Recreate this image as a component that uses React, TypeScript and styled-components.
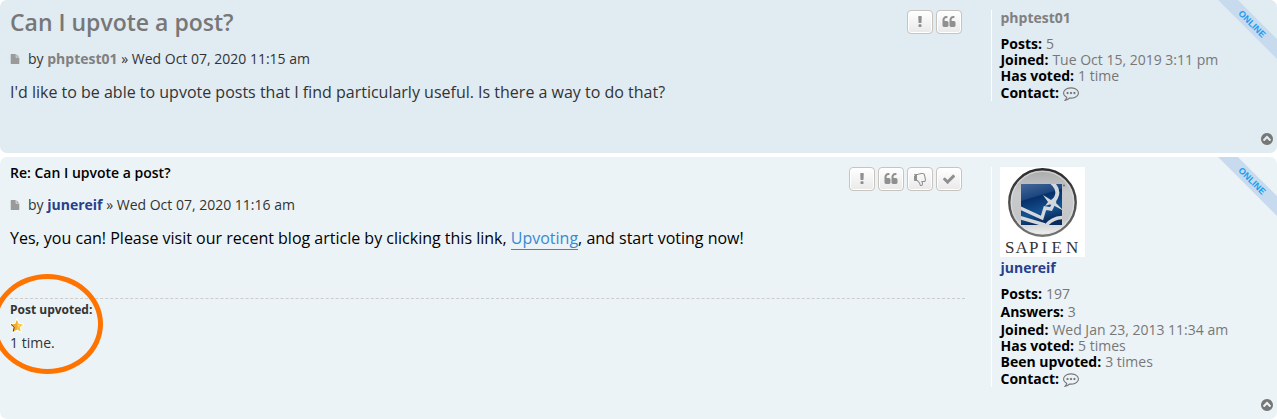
import React from "react";
import styled, { createGlobalStyle, css } from "styled-components";

const GlobalStyle = createGlobalStyle`
  *, *::before, *::after { box-sizing: border-box; }
  body {
    margin: 0;
    background: #fff;
    color: #333;
    font-family: "Open Sans", "Noto Sans", sans-serif;
    font-size: 14px;
    line-height: 16px;
  }
  h2, h3, p, dl, dd, dt, ul { margin: 0; padding: 0; }
  a { text-decoration: none; }
`;

const Topic = styled.main`
  display: flex;
  flex-direction: column;
  gap: 4px;
`;

const Post = styled.article<{ $tone: string }>`
  position: relative;
  overflow: hidden;
  display: flex;
  justify-content: space-between;
  align-items: flex-start;
  padding: 10px 10px 49px;
  border-radius: 7px;
  background: ${(p) => p.$tone};

  &:last-child { padding-bottom: 32px; }
`;

const Body = styled.div`
  width: 76%;
`;

const BodyHeader = styled.header<{ $compact?: boolean }>`
  display: flex;
  justify-content: space-between;
  align-items: flex-start;
  height: 24px;
  margin-bottom: ${(p) => (p.$compact ? "6px" : "17px")};
`;

const TopicTitle = styled.h2`
  color: #777;
  font-size: 23px;
  font-weight: 600;
  line-height: 24px;
`;

const ReplyTitle = styled.h3`
  color: #000;
  font-size: 14px;
  font-weight: 600;
  line-height: 12px;
`;

const Buttons = styled.ul`
  display: flex;
  gap: 3px;
  padding-right: 3px;
  list-style: none;
`;

const ToolButton = styled.button`
  display: flex;
  align-items: center;
  justify-content: center;
  width: 26px;
  height: 24px;
  padding: 0;
  border: 1px solid #c7c3bf;
  border-radius: 4px;
  background: linear-gradient(#fff, #e9e9e9);
  box-shadow: inset 0 0 0 1px #fff;
  color: #8f8f8f;
  cursor: pointer;
`;

const Byline = styled.p`
  display: flex;
  align-items: center;
  gap: 8px;
  height: 16px;
  line-height: 16px;

  svg { color: #9a9a9a; }
`;

const UserLink = styled.a<{ $staff?: boolean }>`
  color: ${(p) => (p.$staff ? "#27408b" : "#808080")};
  font-size: 14px;
  font-weight: 700;
`;

const Content = styled.p<{ $dark?: boolean }>`
  margin-top: 13px;
  color: ${(p) => (p.$dark ? "#000" : "#333")};
  font-size: 16px;
  line-height: 24px;
`;

const ContentLink = styled.a`
  border-bottom: 1px solid #368ad2;
  color: #368ad2;
`;

const Votes = styled.section`
  margin-top: 48px;
  padding-top: 3px;
  border-top: 1px dashed #ccc;
`;

const VotesTitle = styled.h3`
  font-size: 12px;
  font-weight: 700;
  line-height: 16px;
`;

const StarIcon = styled.svg`
  display: block;
  width: 14px;
  height: 16px;
`;

const VotesCount = styled.p`
  line-height: 18px;
`;

const Profile = styled.aside`
  width: calc(22% - 1px);
  padding-left: 8px;
  border-left: 1px solid #fff;
`;

const Avatar = styled.svg`
  display: block;
  width: 85px;
  height: 90px;
  margin-bottom: 3px;
`;

const Facts = styled.dl`
  margin-top: 10px;
`;

const Fact = styled.div<{ $spaced?: boolean }>`
  display: flex;
  gap: 4px;
  color: #777;
  ${(p) => p.$spaced && css`padding: 2px 0;`}

  dt { color: #000; font-weight: 700; }
  a { display: block; color: #777; }
  svg { display: block; }
`;

const ContactFact = styled(Fact)`
  padding-top: 1px;
`;

const Ribbon = styled.div`
  position: absolute;
  top: 17px;
  right: -20px;
  width: 90px;
  height: 14px;
  transform: rotate(45deg);
  background: #c8dbee;
  color: #1b9df0;
  font-family: "Liberation Sans", sans-serif;
  font-size: 9px;
  font-weight: 700;
  line-height: 14px;
  text-align: center;
`;

const TopLink = styled.a`
  position: absolute;
  right: 3px;
  bottom: 7px;
  color: #777;

  svg { display: block; }
`;

const Highlight = styled.div`
  position: absolute;
  left: -8px;
  bottom: 45px;
  width: 111px;
  height: 100px;
  border: 5px solid #ff7300;
  border-radius: 50%;
  pointer-events: none;
`;

const iconPaths = {
  exclamation:
    "M1088 1248v224q0 26-19 45t-45 19h-256q-26 0-45-19t-19-45v-224q0-26 19-45t45-19h256q26 0 45 19t19 45zm30-1056l-28 768q-1 26-20.5 45t-45.5 19h-256q-26 0-45.5-19t-20.5-45l-28-768q-1-26 17.5-45t44.5-19h320q26 0 44.5 19t17.5 45z",
  quote:
    "M832 960v384q0 80-56 136t-136 56h-384q-80 0-136-56t-56-136v-704q0-104 40.5-198.5t109.5-163.5 163.5-109.5 198.5-40.5h64q26 0 45 19t19 45v128q0 26-19 45t-45 19h-64q-106 0-181 75t-75 181v32q0 40 28 68t68 28h224q80 0 136 56t56 136zm896 0v384q0 80-56 136t-136 56h-384q-80 0-136-56t-56-136v-704q0-104 40.5-198.5t109.5-163.5 163.5-109.5 198.5-40.5h64q26 0 45 19t19 45v128q0 26-19 45t-45 19h-64q-106 0-181 75t-75 181v32q0 40 28 68t68 28h224q80 0 136 56t56 136z",
  thumbsDown:
    "M256 448q0-26-19-45t-45-19-45 19-19 45 19 45 45 19 45-19 19-45zm1280 576q0-35-21.5-81t-53.5-47q15-17 25-47.5t10-55.5q0-69-53-119 18-31 18-69 0-37-17.5-73.5t-47.5-52.5q5-30 5-56 0-85-49-126t-136-41h-128q-131 0-342 73-5 2-29 10.5t-35.5 12.5-35 11.5-38 11-33 6.5-31.5 3h-32v640h32q16 0 35.5 9t40 27 38.5 35.5 40 44 34.5 42.5 31.5 41 23 30q55 68 77 91 41 43 59.5 109.5t30.5 125.5 38 85q96 0 128-47t32-145q0-59-48-160.5t-48-159.5h352q50 0 89-38.5t39-89.5zm128 1q0 103-76 179t-180 76h-176q48 99 48 192 0 118-35 186-35 69-102 101.5t-151 32.5q-51 0-90-37-34-33-54-82t-25.5-90.5-17.5-84.5-31-64q-48-50-107-127-101-131-137-155h-274q-53 0-90.5-37.5t-37.5-90.5v-640q0-53 37.5-90.5t90.5-37.5h288q22 0 138-40 128-44 223-66t200-22h112q140 0 226.5 79t85.5 216v5q60 77 60 178 0 22-3 43 38 67 38 144 0 36-9 69 49 73 49 163z",
  check:
    "M1671 566q0 40-28 68l-724 724-136 136q-28 28-68 28t-68-28l-136-136-362-362q-28-28-28-68t28-68l136-136q28-28 68-28t68 28l294 295 656-657q28-28 68-28t68 28l136 136q28 28 28 68z",
  up: "M1293 1139l102-102q19-19 19-45t-19-45l-454-454q-19-19-45-19t-45 19l-454 454q-19 19-19 45t19 45l102 102q19 19 45 19t45-19l307-307 307 307q19 19 45 19t45-19zm371-243q0 209-103 385.5t-279.5 279.5-385.5 103-385.5-103-279.5-279.5-103-385.5 103-385.5 279.5-279.5 385.5-103 385.5 103 279.5 279.5 103 385.5z",
  file: "M1152 512v-472q22 14 36 28l408 408q14 14 28 36h-472zm-128 32q0 40 28 68t68 28h544v1056q0 40-28 68t-68 28h-1344q-40 0-68-28t-28-68v-1600q0-40 28-68t68-28h800v544z",
  comment:
    "M640 896q0 53-37.5 90.5t-90.5 37.5-90.5-37.5-37.5-90.5 37.5-90.5 90.5-37.5 90.5 37.5 37.5 90.5zm384 0q0 53-37.5 90.5t-90.5 37.5-90.5-37.5-37.5-90.5 37.5-90.5 90.5-37.5 90.5 37.5 37.5 90.5zm384 0q0 53-37.5 90.5t-90.5 37.5-90.5-37.5-37.5-90.5 37.5-90.5 90.5-37.5 90.5 37.5 37.5 90.5zm-512-512q-204 0-381.5 69.5t-282 187.5-104.5 255q0 112 71.5 213.5t201.5 175.5l87 50-27 96q-24 91-70 172 152-63 275-171l43-38 57 6q69 8 130 8 204 0 381.5-69.5t282-187.5 104.5-255-104.5-255-282-187.5-381.5-69.5zm896 512q0 174-120 321.5t-326 233-450 85.5q-70 0-145-8-198 175-460 242-49 14-114 22h-5q-15 0-27-10.5t-16-27.5v-1q-3-4-.5-12t2-10 4.5-9.5l6-9 7-8.5 8-9q7-8 31-34.5t34.5-38 31-39.5 32.5-51 27-59 26-76q-157-89-247.5-220t-90.5-281q0-174 120-321.5t326-233 450-85.5 450 85.5 326 233 120 321.5z",
};

type IconName = keyof typeof iconPaths;

function Icon({ name, size = 14 }: { name: IconName; size?: number }) {
  return (
    <svg width={size} height={size} viewBox="0 0 1792 1792" fill="currentColor" aria-hidden="true">
      <path d={iconPaths[name]} />
    </svg>
  );
}

function Toolbar({ items }: { items: [IconName, string][] }) {
  return (
    <Buttons>
      {items.map(([name, label]) => (
        <li key={name}>
          <ToolButton type="button" aria-label={label} title={label}>
            <Icon name={name} />
          </ToolButton>
        </li>
      ))}
    </Buttons>
  );
}

function PostedBy({ user, staff, date }: { user: string; staff?: boolean; date: string }) {
  return (
    <Byline>
      <svg width="10" height="10" viewBox="0 0 1792 1792" preserveAspectRatio="none" fill="currentColor" aria-hidden="true">
        <path d={iconPaths.file} />
      </svg>
      <span>
        by <UserLink $staff={staff} href="#user">{user}</UserLink> » {date}
      </span>
    </Byline>
  );
}

function Contact() {
  return (
    <ContactFact>
      <dt>Contact:</dt>
      <dd>
        <a href="#contact" aria-label="Contact user">
          <Icon name="comment" size={16} />
        </a>
      </dd>
    </ContactFact>
  );
}

function SapienAvatar() {
  return (
    <Avatar viewBox="0 0 85 90" role="img" aria-label="Sapien">
      <defs>
        <linearGradient id="disc" x1="0" y1="0" x2="0" y2="1">
          <stop offset="0" stopColor="#a8a9ab" />
          <stop offset="0.35" stopColor="#c9cacc" />
          <stop offset="0.75" stopColor="#c4c5c7" />
          <stop offset="1" stopColor="#f2f2f2" />
        </linearGradient>
        <linearGradient id="rim" x1="0" y1="0" x2="0" y2="1">
          <stop offset="0" stopColor="#2c2c2c" />
          <stop offset="0.5" stopColor="#4a4a4a" />
          <stop offset="1" stopColor="#747474" />
        </linearGradient>
        <linearGradient id="blue" x1="0" y1="0" x2="0.3" y2="1">
          <stop offset="0" stopColor="#45689b" />
          <stop offset="0.36" stopColor="#1d4780" />
          <stop offset="0.4" stopColor="#06306a" />
          <stop offset="0.75" stopColor="#145291" />
          <stop offset="1" stopColor="#0a2c5c" />
        </linearGradient>
        <clipPath id="square">
          <rect x="21" y="17" width="41" height="41" />
        </clipPath>
      </defs>
      <rect width="85" height="90" fill="#fff" />
      <circle cx="42.5" cy="35.5" r="33.2" fill="url(#disc)" stroke="url(#rim)" strokeWidth="2.4" />
      <circle cx="42.5" cy="35.5" r="31.2" fill="none" stroke="#e4e4e4" strokeOpacity="0.6" strokeWidth="1.2" />
      <rect x="21" y="17" width="41" height="41" fill="url(#blue)" />
      <g clipPath="url(#square)" fill="none" stroke="#d4d7dc">
        <path d="M50 14q9 7 7 14t-7 8" strokeWidth="4" />
        <path d="M18 40l24 11 3-10 6 1 4-8" strokeWidth="3.4" />
        <path d="M18 50l27 8" strokeWidth="3.4" />
        <path d="M45 60q6-9 18-9.500" strokeWidth="3.4" />
      </g>
      <path d="M43 28l8 5 6-5-2 7 9 9-13-7-6 2 3-4z" fill="#d4d7dc" />
      <circle cx="64" cy="18.500" r="0.900" fill="#666" />
      <text
        x="5 15.500 29 41.500 51.500 66"
        y="86"
        fill="#333"
        fontFamily="Liberation Serif, serif"
        fontSize="17"
      >
        SAPIEN
      </text>
    </Avatar>
  );
}

function PostCorner() {
  return (
    <>
      <Ribbon>ONLINE</Ribbon>
      <TopLink href="#top" aria-label="Top">
        <Icon name="up" />
      </TopLink>
    </>
  );
}

export default function App() {
  return (
    <>
      <GlobalStyle />
      <Topic id="top">
        <Post $tone="#e1ebf2">
          <Body>
            <BodyHeader>
              <TopicTitle>Can I upvote a post?</TopicTitle>
              <Toolbar items={[["exclamation", "Report this post"], ["quote", "Reply with quote"]]} />
            </BodyHeader>
            <PostedBy user="phptest01" date="Wed Oct 07, 2020 11:15 am" />
            <Content>
              I'd like to be able to upvote posts that I find particularly useful. Is there a way to do that?
            </Content>
          </Body>
          <Profile>
            <UserLink href="#user">phptest01</UserLink>
            <Facts>
              <Fact><dt>Posts:</dt><dd>5</dd></Fact>
              <Fact><dt>Joined:</dt><dd>Tue Oct 15, 2019 3:11 pm</dd></Fact>
              <Fact><dt>Has voted:</dt><dd>1 time</dd></Fact>
              <Contact />
            </Facts>
          </Profile>
          <PostCorner />
        </Post>

        <Post $tone="#ecf3f7">
          <Body>
            <BodyHeader $compact>
              <ReplyTitle>Re: Can I upvote a post?</ReplyTitle>
              <Toolbar
                items={[
                  ["exclamation", "Report this post"],
                  ["quote", "Reply with quote"],
                  ["thumbsDown", "Remove vote"],
                  ["check", "Accept this answer"],
                ]}
              />
            </BodyHeader>
            <PostedBy user="junereif" staff date="Wed Oct 07, 2020 11:16 am" />
            <Content $dark>
              Yes, you can! Please visit our recent blog article by clicking this link,{" "}
              <ContentLink href="#upvoting">Upvoting</ContentLink>, and start voting now!
            </Content>
            <Votes>
              <VotesTitle>Post upvoted:</VotesTitle>
              <StarIcon viewBox="0 0 14 16" aria-hidden="true">
                <path
                  d="M7 2l1.700 4 4.300.4-3.200 2.900 1 4.300L7 11.400l-3.800 2.200 1-4.300L1 6.400 5.300 6z"
                  fill="#fbc02d"
                  stroke="#fff"
                  strokeWidth="2"
                  paintOrder="stroke"
                />
                <path d="M7 2v9.400l-3.800 2.200 1-4.300L1 6.400 5.300 6z" fill="#f0ab30" />
                <path d="M1 6.400l3.200 2.900-1 4.300" fill="none" stroke="#54442c" strokeWidth="1" />
                <path d="M7 4.500l1 2.600 2.500.3-2 1.700z" fill="#ffe27a" />
              </StarIcon>
              <VotesCount>1 time.</VotesCount>
            </Votes>
          </Body>
          <Profile>
            <SapienAvatar />
            <UserLink $staff href="#user">junereif</UserLink>
            <Facts>
              <Fact><dt>Posts:</dt><dd>197</dd></Fact>
              <Fact $spaced><dt>Answers:</dt><dd>3</dd></Fact>
              <Fact><dt>Joined:</dt><dd>Wed Jan 23, 2013 11:34 am</dd></Fact>
              <Fact><dt>Has voted:</dt><dd>5 times</dd></Fact>
              <Fact><dt>Been upvoted:</dt><dd>3 times</dd></Fact>
              <Contact />
            </Facts>
          </Profile>
          <PostCorner />
          <Highlight />
        </Post>
      </Topic>
    </>
  );
}
